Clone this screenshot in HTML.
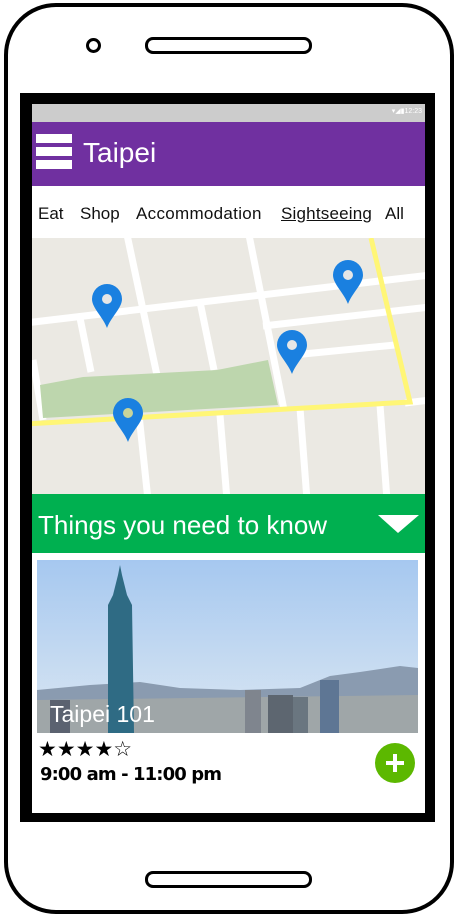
<!DOCTYPE html>
<html><head><meta charset="utf-8"><style>
body{margin:0;width:456px;height:915px;overflow:hidden;background:#fff;font-family:"Liberation Sans",sans-serif;position:relative}
.abs{position:absolute}
.t{position:absolute;top:100px;font-size:17px;color:#111;white-space:nowrap}
</style></head><body>
<div class="abs" style="left:4px;top:3px;width:442px;height:903px;border:4px solid #000;border-radius:52px"></div>
<div class="abs" style="left:86px;top:38px;width:9px;height:9px;border:3px solid #000;border-radius:50%"></div>
<div class="abs" style="left:145px;top:37px;width:161px;height:11px;border:3px solid #000;border-radius:8px"></div>
<div class="abs" style="left:145px;top:871px;width:161px;height:11px;border:3px solid #000;border-radius:8px"></div>
<div class="abs" style="left:20px;top:93px;width:415px;height:729px;background:#000"></div>
<div class="abs" style="left:32px;top:104px;width:393px;height:709px;background:#fff;overflow:hidden">
 <div class="abs" style="left:0;top:0;width:393px;height:18px;background:#ccc"></div>
 <div class="abs" style="right:3px;top:3px;font-size:7px;color:#fff">▾◢▮12:23</div>
 <div class="abs" style="left:0;top:18px;width:393px;height:64px;background:#7030a0"></div>
 <div class="abs" style="left:4px;top:30px;width:36px;height:9px;background:#fff"></div>
 <div class="abs" style="left:4px;top:43px;width:36px;height:9px;background:#fff"></div>
 <div class="abs" style="left:4px;top:56px;width:36px;height:9px;background:#fff"></div>
 <div class="abs" style="left:51px;top:33px;font-size:28px;color:#fff">Taipei</div>
 <div class="t" style="left:6px">Eat</div>
 <div class="t" style="left:48px">Shop</div>
 <div class="t" style="left:104px;letter-spacing:0.3px">Accommodation</div>
 <div class="t" style="left:249px;text-decoration:underline;letter-spacing:0.2px">Sightseeing</div>
 <div class="t" style="left:353px">All</div>
</div>
<svg class="abs" style="left:0;top:0" width="456" height="915">
 <defs><clipPath id="c"><rect x="32" y="238" width="393" height="256"/></clipPath></defs>
 <g clip-path="url(#c)">
 <rect x="32" y="238" width="393" height="256" fill="#ebe9e3"/>
 <g stroke="#fff" stroke-width="7" fill="none">
  <line x1="25" y1="323" x2="430" y2="275"/>
  <line x1="263" y1="326" x2="430" y2="307"/>
  <line x1="283" y1="356" x2="395" y2="345"/>
  <line x1="126" y1="230" x2="158" y2="380"/>
  <line x1="139" y1="415" x2="148" y2="500"/>
  <line x1="248" y1="230" x2="284" y2="410"/>
  <line x1="200" y1="302" x2="214" y2="370"/>
  <line x1="220" y1="415" x2="227" y2="500"/>
  <line x1="80" y1="318" x2="91" y2="372"/>
  <line x1="300" y1="408" x2="307" y2="500"/>
  <line x1="380" y1="405" x2="387" y2="500"/>
  <line x1="33" y1="360" x2="43" y2="420"/>
  <line x1="405" y1="403" x2="430" y2="400"/>
 </g>
 <polygon points="40,385 83,377 217,370 268,360 278,405 43,418" fill="#bdd6ad"/>
 <polyline points="25,424 410,402 371,238" fill="none" stroke="#fff676" stroke-width="5"/>
 <g fill="#1a80e0">
  <g transform="translate(107,299)"><path d="M-15,0 A15,15 0 1 1 15,0 C15,9 4,18 0,29 C-4,18 -15,9 -15,0Z"/><circle r="5" fill="#e6e6e6"/></g>
  <g transform="translate(348,275)"><path d="M-15,0 A15,15 0 1 1 15,0 C15,9 4,18 0,29 C-4,18 -15,9 -15,0Z"/><circle r="5" fill="#e6e6e6"/></g>
  <g transform="translate(292,345)"><path d="M-15,0 A15,15 0 1 1 15,0 C15,9 4,18 0,29 C-4,18 -15,9 -15,0Z"/><circle r="5" fill="#e6e6e6"/></g>
  <g transform="translate(128,413)"><path d="M-15,0 A15,15 0 1 1 15,0 C15,9 4,18 0,29 C-4,18 -15,9 -15,0Z"/><circle r="5" fill="#c8d49a"/></g>
 </g>
 </g>
 <rect x="32" y="494" width="393" height="59" fill="#00b050"/>
 <text x="38" y="534" font-family="Liberation Sans" font-size="26" fill="#fff">Things you need to know</text>
 <polygon points="378,515 419,515 398,533" fill="#fff"/>
 <defs><linearGradient id="sky" x1="0" y1="0" x2="0" y2="1"><stop offset="0" stop-color="#a6c8f0"/><stop offset="1" stop-color="#dbe7f2"/></linearGradient></defs>
 <rect x="37" y="560" width="381" height="173" fill="url(#sky)"/>
 <path d="M37,690 L90,685 L140,682 L180,688 L240,690 L300,688 L330,676 L360,672 L400,666 L418,668 L418,733 L37,733Z" fill="#8a9bb0"/>
 <path d="M37,700 L418,695 L418,733 L37,733Z" fill="#9fa6a8"/>
 <rect x="50" y="700" width="20" height="33" fill="#5b6270"/>
 <rect x="245" y="690" width="16" height="43" fill="#7f858e"/>
 <rect x="268" y="695" width="25" height="38" fill="#5d6670"/>
 <rect x="320" y="680" width="19" height="53" fill="#5e7694"/>
 <rect x="293" y="697" width="15" height="36" fill="#6a7680"/>
 <path d="M108,733 L108,605 L113,595 L118,575 L120,565 L122,575 L127,595 L132,605 L134,733Z" fill="#2f6b84"/>
 <text x="50" y="722" font-family="Liberation Sans" font-size="23" fill="#fff">Taipei 101</text>
 <text x="38" y="756" font-family="DejaVu Sans" font-size="21" fill="#000" letter-spacing="0">★★★★☆</text>
 <text x="40" y="780" font-family="DejaVu Sans" font-size="18" font-weight="bold" fill="#000" textLength="182">9:00 am - 11:00 pm</text>
 <circle cx="395" cy="763" r="20" fill="#5cb800"/>
 <rect x="386" y="761" width="18" height="4" fill="#fff"/><rect x="393" y="754" width="4" height="18" fill="#fff"/>
</svg>
</body></html>
